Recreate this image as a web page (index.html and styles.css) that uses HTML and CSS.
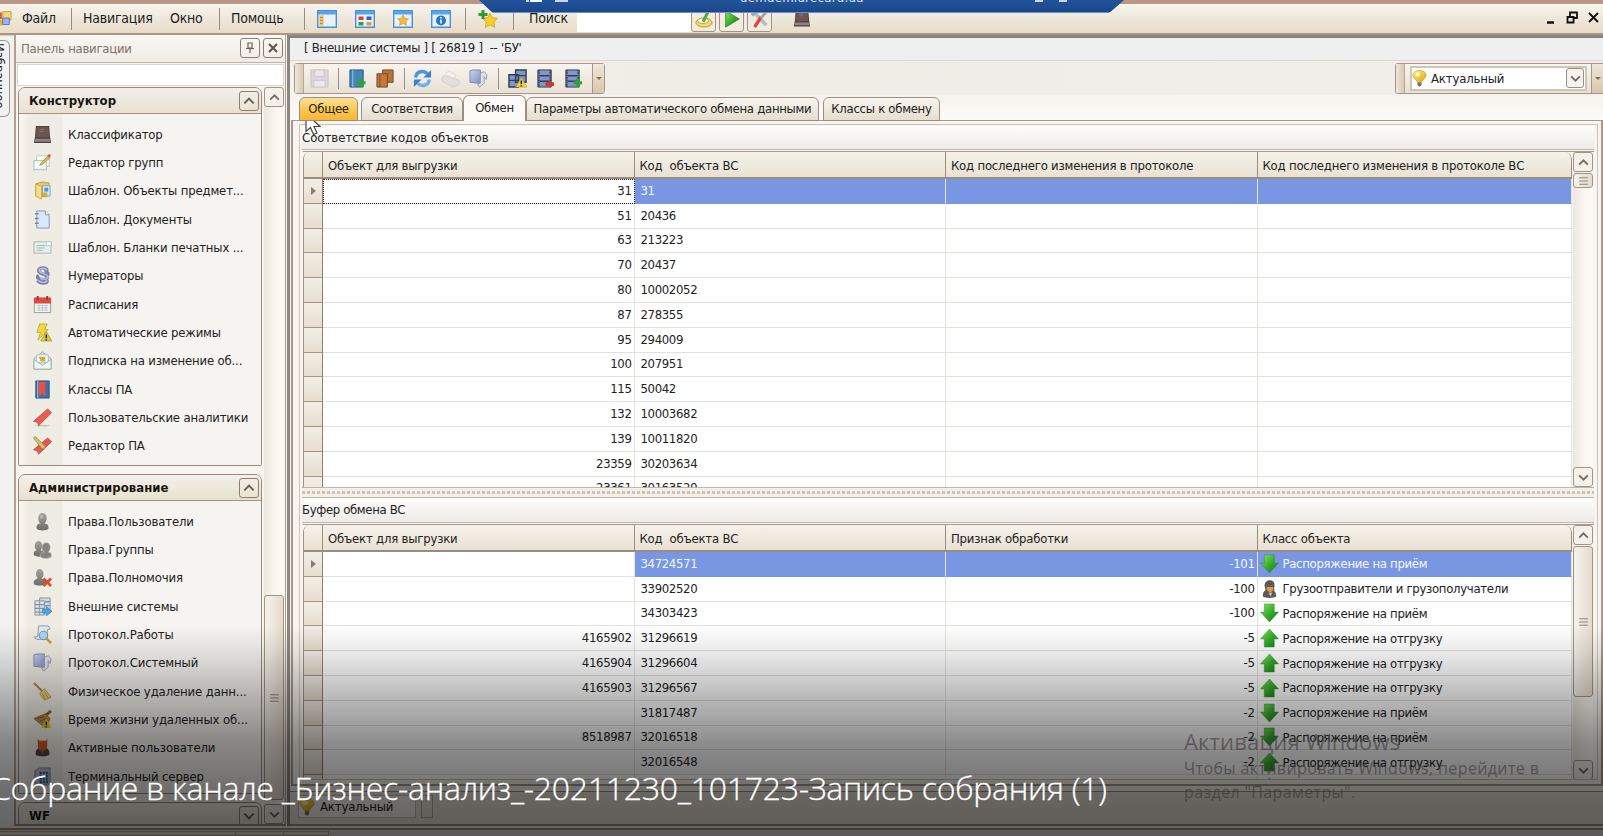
FILE: index.html
```html
<!DOCTYPE html>
<html lang="ru">
<head>
<meta charset="utf-8">
<title>Внешние системы</title>
<link rel="stylesheet" href="styles.css">
</head>
<body>
<svg class="defs" aria-hidden="true">
<defs>
<linearGradient id="gGreen" x1="0" y1="0" x2="1" y2="1"><stop offset="0" stop-color="#8be85f"/><stop offset=".55" stop-color="#35a72b"/><stop offset="1" stop-color="#14781a"/></linearGradient>
<linearGradient id="gYellow" x1="0" y1="0" x2="1" y2="1"><stop offset="0" stop-color="#fff08a"/><stop offset="1" stop-color="#e0a800"/></linearGradient>
<linearGradient id="gGray" x1="0" y1="0" x2="0" y2="1"><stop offset="0" stop-color="#a5a39f"/><stop offset="1" stop-color="#6d6b68"/></linearGradient>
<linearGradient id="gBlue" x1="0" y1="0" x2="1" y2="1"><stop offset="0" stop-color="#c9d3ef"/><stop offset="1" stop-color="#8791c4"/></linearGradient>
</defs>
<symbol id="book" viewBox="0 0 20 20"><path d="M3 1h14l1 12 1 6H1l1-6z" fill="#51423d"/><path d="M4 2h12l1 11H3z" fill="#6b5750"/><path d="M2.500 14.500h15l.5 3H2z" fill="#8d8380"/><path d="M7 5h5M7 7h4" stroke="#8c766d"/></symbol>
<symbol id="edit" viewBox="0 0 20 20"><path d="M4 3h13v11H4z" fill="#fff" stroke="#b8c4c0"/><path d="M1 8h13v10l-2-1-2 1-2-1-2 1-2-1-3 1z" fill="#f3faf8" stroke="#a9bab8"/><path d="M8 11l8-8 2 2-8 7-3 1z" fill="#d9c04c" stroke="#86742a" stroke-width=".6"/><path d="M15 3l2-2 2 2-2 2z" fill="#d8554b"/></symbol>
<symbol id="folder" viewBox="0 0 20 20"><path d="M3 3l7-2 7 1v13l-4 1H3z" fill="#edc564" stroke="#c89a3c"/><path d="M10 5h8v11h-8z" fill="#d7e8f3" stroke="#7ea7c4"/><path d="M12 7h4v4h-4z" fill="#4f8ed0"/><path d="M3 3l6 3v13l-6-3z" fill="#f8dd8e" stroke="#cfa64d"/><path d="M10 12h5v5h-5z" fill="#d6ae35"/></symbol>
<symbol id="doc" viewBox="0 0 20 20"><path d="M4 1h9l4 4v14H4z" fill="#dbe7fa" stroke="#8795b2"/><path d="M13 1v4h4" fill="#fff" stroke="#8795b2"/><path d="M2 4h4M2 9h4M2 14h4" stroke="#7c869c" stroke-width="1.6"/></symbol>
<symbol id="form" viewBox="0 0 20 20"><path d="M1 4h18v12H1z" fill="#e4eeec" stroke="#a5b8b4"/><path d="M4 8h9M4 10.500h8M4 13h6" stroke="#a4b8b0"/><path d="M14 4h5v4h-5z" fill="#fafdfc" stroke="#a9bbb8" stroke-width=".7"/></symbol>
<symbol id="para" viewBox="0 0 20 20"><path d="M15 5c-1-4-9-4-9 0 0 4 9 3 9 7 0 3-6 3-8 1M6 10c-3 2 0 4 3 4M14 10c3-1 2-4-2-4M5 15c2 4 10 4 10 0" fill="none" stroke="#7a7fae" stroke-width="3.600"/><path d="M14.500 4.500c-1-3-8-3-8 0 0 4 9 3 9 7 0 3-6 3-8 1M5.500 15c2 3 9 3 9 0" fill="none" stroke="#b9bde6" stroke-width="1.500"/></symbol>
<symbol id="cal" viewBox="0 0 20 20"><path d="M1.500 3h17v15.500h-17z" fill="#f1f6f6" stroke="#9a9c9b"/><path d="M1 3h18v6H1z" fill="#e2493f"/><path d="M5 1v4M15 1v4" stroke="#8a3a36" stroke-width="2"/><path d="M4 11h12M4 13.500h12M4 16h12M6.500 10v7M10 10v7M13.500 10v7" stroke="#b5c4c6" stroke-width=".8"/></symbol>
<symbol id="bolt" viewBox="0 0 20 20"><path d="M7 1h8l-3 6h4L5 18l3-8H4z" fill="#f0d93f" stroke="#b8a02b" stroke-width=".8"/><path d="M14 9l6 10H8z" fill="#d9c72e" stroke="#a09020" stroke-width=".6"/><path d="M14 12v4M14 17v1.500" stroke="#222" stroke-width="1.500"/></symbol>
<symbol id="mail" viewBox="0 0 20 20"><path d="M1 8l9-7 9 7v11H1z" fill="#dce8e8" stroke="#93a7a9"/><path d="M4 4h12v8H4z" fill="#fff" stroke="#a9bac8"/><path d="M6 6h7v5H8z" fill="#cfb032"/><path d="M1 9l9 6 9-6v10H1z" fill="#eef6f4" stroke="#9eb2b2"/></symbol>
<symbol id="class" viewBox="0 0 20 20"><path d="M3 1h14v18H3z" fill="#3f72a8" stroke="#294d78"/><path d="M5 1v18" stroke="#b6c9dc"/><path d="M6 2h7v15l-3.500-3L6 17z" fill="#e5504d"/></symbol>
<symbol id="ribbon" viewBox="0 0 20 20"><ellipse cx="10" cy="18.500" rx="8" ry="1" fill="#c9c5bd"/><path d="M15.500 1l4 4L6 18.500l-1.500-3.500-4-1z" fill="#ea5c55" stroke="#b84640" stroke-width=".8"/></symbol>
<symbol id="ribbonEdit" viewBox="0 0 20 20"><path d="M15.500 2l4 4L6 19l-1.500-3.500-4-1z" fill="#e9584e" stroke="#b84640" stroke-width=".8"/><path d="M1 1l2 0 10 10-1 3-3-1L1 3z" fill="#d8bd64" stroke="#8b7a40" stroke-width=".6"/></symbol>
<symbol id="user" viewBox="0 0 20 20"><path d="M4 18c-1-4 1-6 4-6-4-3-3-11 2-11s6 8 2 11c4 0 5 3 4 6-2 2-10 2-12 0z" fill="url(#gGray)"/><circle cx="9" cy="5" r="2" fill="#c3c1bd" opacity=".7"/></symbol>
<symbol id="users" viewBox="0 0 20 20"><path d="M1 16c-1-4 1-5 3-5C0 8 2 1 6 1s5 7 2 10c3 0 4 2 4 5-3 2-8 2-11 0z" fill="url(#gGray)"/><path d="M8 18c-1-4 1-5 4-5-4-3-3-10 2-10s5 7 2 10c3 0 4 2 3 5-3 2-8 2-11 0z" fill="#868480" stroke="#b5b3ae" stroke-width=".6"/></symbol>
<symbol id="userX" viewBox="0 0 20 20"><path d="M1 17c-1-4 1-5 4-6C2 8 3 1 7 1s6 7 2 10c4 1 5 3 4 6-3 2-9 2-12 0z" fill="url(#gGray)"/><path d="M11 11l8 8M19 11l-8 8" stroke="#dc4b2c" stroke-width="2.800"/></symbol>
<symbol id="server" viewBox="0 0 20 20"><path d="M7 1h11v15H7z" fill="#d3d9e0" stroke="#8b929c"/><path d="M2 4h10v15H2z" fill="#dce1e7" stroke="#8b929c"/><path d="M2 8h10M2 12h10M2 16h10M12 5h6M12 9h6" stroke="#8b929c" stroke-width="1.400"/><path d="M7 4v15" stroke="#8b929c"/><path d="M10 13h4v-3l6 5-6 5v-3h-4z" fill="#49a5e6" stroke="#2677bb" stroke-width=".6"/></symbol>
<symbol id="log" viewBox="0 0 20 20"><path d="M6 1h10l2 3-3 1v10H4l-3-2 4-1z" fill="#e4e9ef" stroke="#8e97a5"/><circle cx="11" cy="11" r="4.500" fill="#a8d6ef" stroke="#6b91ac"/><path d="M14 14l5 5" stroke="#d3963b" stroke-width="2.600"/></symbol>
<symbol id="scroll" viewBox="0 0 20 20"><path d="M1 2l3-1h8v13l-2 1-9-1z" fill="url(#gBlue)" stroke="#8689b3"/><path d="M12 4l4-1 3 3-1 5-2-3v7l-5 4-2-3 3-1z" fill="#dfe2ee" stroke="#878da2" stroke-width=".8"/></symbol>
<symbol id="broom" viewBox="0 0 20 20"><path d="M1 1l9 9" stroke="#a98849" stroke-width="2.200"/><path d="M12 7l7 9-7 3-5-7z" fill="#e9cf77" stroke="#a9863d" stroke-width=".8"/><path d="M10 12l3 6M12 10l4 7" stroke="#b28c3c" stroke-width=".8"/></symbol>
<symbol id="broomWarn" viewBox="0 0 20 20"><path d="M19 1l-6 5" stroke="#806540" stroke-width="3"/><path d="M13 4l5 5-5 10L1 9z" fill="#b88b4c" stroke="#7d5a2c" stroke-width=".8"/><path d="M4 9l8-2M7 12l7-3" stroke="#7d5a2c"/><path d="M14 9l6 10H9z" fill="#dfca25"/><path d="M14 12v4M14 17v1.500" stroke="#222" stroke-width="1.500"/></symbol>
<symbol id="active" viewBox="0 0 20 20"><path d="M3 18c-1-5 2-7 4-8h6c3 1 5 4 4 8-3 2-11 2-14 0z" fill="#4d4542"/><path d="M5 1l2 2h6l2-2v6c0 5-2 6-5 6s-5-1-5-6z" fill="#cd5b25"/><path d="M8 11h4l-2 6z" fill="#dd4b24"/></symbol>
<symbol id="terminal" viewBox="0 0 20 20"><path d="M2 4l5-3h11v16l-3 2H2z" fill="#b8bec8" stroke="#79808b"/><path d="M7 5h9v12H7z" fill="#345f9c"/><path d="M7 8h9M7 11h9M7 14h9M10 5v12M13 5v12" stroke="#b9cae2" stroke-width=".8"/></symbol>
<symbol id="down" viewBox="0 0 20 20"><path d="M4.500.5h10.500v8.500h4.500L10 19.500.5 9h4z" fill="url(#gGreen)" stroke="#279428" stroke-width=".5"/></symbol>
<symbol id="up" viewBox="0 0 20 20"><path d="M4.500 19.500H15V11h4.500L10 .5.500 11h4z" fill="url(#gGreen)" stroke="#279428" stroke-width=".5"/></symbol>
<symbol id="agent" viewBox="0 0 20 20"><path d="M3 18c0-5 1-6 4-7h6c3 1 4 3 4 7-2 2-12 2-14 0z" fill="#5c5956"/><path d="M5 8c-2-9 12-10 10-1v5H6z" fill="#5a5856"/><path d="M7 6h7v5l-3 3-4-3z" fill="#d79c5c"/><path d="M7 7h8" stroke="#423b36" stroke-width="1.500"/><path d="M9 14h4l-2 4z" fill="#c8c3b8"/></symbol>
<symbol id="bulb" viewBox="0 0 18 20"><path d="M6 14c0-3-5-4-5-8C1-1.500 17-1.500 17 6c0 4-5 5-5 8z" fill="url(#gYellow)" stroke="#c79a17" stroke-width=".7"/><path d="M6.500 14.500h5V18L9 20l-2.500-2z" fill="#77736c"/><circle cx="7" cy="5" r="2.500" fill="#fffbd0"/></symbol>
<symbol id="save" viewBox="0 0 20 20"><path d="M1 1h18v18H1z" fill="#dcd6d8" stroke="#c9c3c5"/><path d="M5 1h10v7H5zM4 12h12v7H4z" fill="#ece8e8" stroke="#cdc6c8"/></symbol>
<symbol id="bookAdd" viewBox="0 0 20 20"><path d="M2 1h14v18H2z" fill="#4388b9" stroke="#285a84"/><path d="M5 1v18" stroke="#9cc8e0"/><path d="M14 10v9M9.500 14.500h9" stroke="#2ba336" stroke-width="3"/></symbol>
<symbol id="copy" viewBox="0 0 20 20"><path d="M7 1h11v13H7z" fill="#b87336" stroke="#744622"/><path d="M1 5h11v14H1z" fill="#c4793b" stroke="#744622"/><path d="M4 5v14" stroke="#80481e"/></symbol>
<symbol id="refresh" viewBox="0 0 20 20"><path d="M3 9c0-7 9-8 12-4" fill="none" stroke="#4b96da" stroke-width="3.600"/><path d="M11 9h8V1z" fill="#3c82cb"/><path d="M17 11c0 7-9 8-12 4" fill="none" stroke="#6bb2e8" stroke-width="3.600"/><path d="M9 11H1v8z" fill="#3c82cb"/></symbol>
<symbol id="print" viewBox="0 0 20 20"><path d="M2 8l6-6 8 4-3 5z" fill="#f3f0ed" stroke="#dcd7d2"/><path d="M1 9l5-2 13 5v4l-6 3L1 13z" fill="#e4dfda" stroke="#d7d1ca"/></symbol>
<symbol id="film" viewBox="0 0 20 20"><path d="M2 1h14v18H2z" fill="#8296c8" stroke="#333c50"/><path d="M3 1v18M15 1v18" stroke="#39435a" stroke-width="2" stroke-dasharray="1.500 1"/><path d="M4 7h10M4 13h10" stroke="#333d56" stroke-width="1.600"/></symbol>
<symbol id="filmWarn" viewBox="0 0 20 20"><path d="M8 1h11v13H8zM1 6h10v13H1z" fill="#8296c8" stroke="#333c50" stroke-width="1.500"/><path d="M1 12h10M8 7h11" stroke="#333d56" stroke-width="1.500"/><path d="M14 9l6 10H8z" fill="#e9d63b" stroke="#a99a22" stroke-width=".6"/><path d="M14 12v4M14 17v1.500" stroke="#222" stroke-width="1.500"/></symbol>
<symbol id="filmDel" viewBox="0 0 20 20"><use href="#film"/><rect x="10" y="14" width="9" height="4" rx="1" fill="#d8332d"/></symbol>
<symbol id="filmAdd" viewBox="0 0 20 20"><use href="#film"/><path d="M14.500 10v9M10 14.500h9" stroke="#2ba336" stroke-width="3.200"/></symbol>
<symbol id="starAdd" viewBox="0 0 20 20"><path d="M12 4l2.300 4.800 5.200.6-3.800 3.600 1 5.500-4.700-2.700-4.700 2.700 1-5.500L4.500 9.400l5.200-.6z" fill="#f5cf2c" stroke="#d39a12" stroke-width=".8"/><path d="M5 1v9M.5 5.500h9" stroke="#2b9a2f" stroke-width="3"/></symbol>
<symbol id="win" viewBox="0 0 20 18"><path d="M.7.7h18.600v16.600H.7z" fill="#e9f2fc" stroke="#4a90d4" stroke-width="1.400"/><path d="M1 1h18v3.500H1z" fill="#58a4e8"/></symbol>
<symbol id="winSide" viewBox="0 0 20 18"><use href="#win"/><path d="M2 5h5v11H2z" fill="#f3d590"/><path d="M3 7.500h3M3 10.500h3M3 13.500h3" stroke="#c18c2d" stroke-width="1.500"/></symbol>
<symbol id="winTiles" viewBox="0 0 20 18"><use href="#win"/><path d="M3.500 6.500h5v3.500h-5z" fill="#d94436"/><path d="M11.500 6.500h5v3.500h-5z" fill="#3564b8"/><path d="M3.500 12h5v3.500h-5z" fill="#3e9a42"/><path d="M11.500 12h5v3.500h-5z" fill="#e3a02d"/></symbol>
<symbol id="winStar" viewBox="0 0 20 18"><use href="#win"/><path d="M10 5l1.800 3.400 3.700.4-2.700 2.600.7 3.900-3.500-1.900-3.500 1.900.7-3.900-2.700-2.600 3.700-.4z" fill="#f2bd3f" stroke="#cb8e1d" stroke-width=".6"/></symbol>
<symbol id="winInfo" viewBox="0 0 20 18"><use href="#win"/><circle cx="10" cy="10.500" r="5" fill="#2279d2"/><path d="M10 7v1.500M10 9.500v4" stroke="#fff" stroke-width="1.600"/></symbol>
<symbol id="clean" viewBox="0 0 20 20"><ellipse cx="10" cy="14" rx="9" ry="5" fill="#f0dd62" stroke="#af9328"/><ellipse cx="9" cy="12" rx="6" ry="3" fill="#fffbe0" stroke="#b2a260"/><path d="M9 13l6-12" stroke="#54a849" stroke-width="3.500"/></symbol>
<symbol id="play" viewBox="0 0 20 20"><path d="M3 1l15 9-15 9z" fill="url(#gGreen)" stroke="#1c7421" stroke-width=".8"/></symbol>
<symbol id="tools" viewBox="0 0 20 20"><path d="M3 2l14 15" stroke="#b9bdc0" stroke-width="4"/><path d="M1 6l6-5" stroke="#a5a9ac" stroke-width="4"/><path d="M11 8l-7 11" stroke="#e4442f" stroke-width="3.600"/><path d="M18 1l-7 8" stroke="#9fa3a6" stroke-width="3"/></symbol>
<symbol id="chevUp" viewBox="0 0 12 12"><path d="M2 8l4-4 4 4" fill="none" stroke="currentColor" stroke-width="1.700"/></symbol>
<symbol id="chevDown" viewBox="0 0 12 12"><path d="M2 4l4 4 4-4" fill="none" stroke="currentColor" stroke-width="1.700"/></symbol>
<symbol id="lines" viewBox="0 0 12 12"><path d="M2 3.500h8M2 6.500h8M2 9.500h8" stroke="#8f8377"/></symbol>
</svg>

<div class="screen">
  <header class="menubar">
    <svg class="app-icon" viewBox="4 0 13 18"><path d="M0 2h6v7H0z" fill="#d65a3c"/><path d="M7 1h9v9H7z" fill="#f6d873" stroke="#c39a32"/><path d="M0 10h7v6H0z" fill="#e7af46"/><path d="M7 8h7v7H7z" fill="#9eb4ea" stroke="#5571bb"/></svg>
    <span class="m m-file">Файл</span><i class="msep"></i>
    <span class="m m-nav">Навигация</span><span class="m m-win">Окно</span><i class="msep"></i>
    <span class="m m-help">Помощь</span><i class="msep"></i>
    <span class="win-icons"><svg><use href="#winSide"/></svg><svg><use href="#winTiles"/></svg><svg><use href="#winStar"/></svg><svg><use href="#winInfo"/></svg></span>
    <i class="msep"></i><svg class="star-add"><use href="#starAdd"/></svg><i class="msep"></i>
    <span class="m m-find">Поиск</span>
    <span class="find-box"></span>
    <span class="find-btns"><b><svg><use href="#clean"/></svg></b><b><svg><use href="#play"/></svg></b><b><svg><use href="#tools"/></svg></b></span>
    <svg class="menu-book"><use href="#book"/></svg>
    <svg class="mdi" viewBox="0 0 56 16"><path d="M2 12.500h7" stroke="#111" stroke-width="2.500"/><path d="M25 6V2.500h7V8h-3M22.500 7h6v5.500h-6z" fill="none" stroke="#111" stroke-width="1.800"/><path d="M44 3l9 9M53 3l-9 9" stroke="#111" stroke-width="1.800"/></svg>
  </header>

  <div class="main">
    <div class="rail"><div class="rail-tab"><span>Избранное</span></div></div>

    <aside class="nav">
      <div class="nav-title"><span>Панель навигации</span>
        <b><svg viewBox="0 0 12 12"><path d="M4 1h4v5H4zM2 6.500h8M6 7v4" fill="none" stroke="#6f6157" stroke-width="1.200"/></svg></b>
        <b><svg viewBox="0 0 12 12"><path d="M2 2l8 8M10 2l-8 8" stroke="#5d5048" stroke-width="2"/></svg></b></div>
      <div class="nav-input"></div>
      <div class="nav-body">
        <div class="groups">
          <section class="group g1"><h2>Конструктор<b><svg><use href="#chevUp"/></svg></b></h2><ul id="navBuild"></ul></section>
          <section class="group g2"><h2>Администрирование<b><svg><use href="#chevUp"/></svg></b></h2><ul id="navAdmin"></ul></section>
          <section class="group g3"><h2>WF<b><svg><use href="#chevDown"/></svg></b></h2></section>
        </div>
        <div class="vscroll"><b class="sbtn"><svg><use href="#chevUp"/></svg></b><b class="thumb nav-thumb"><svg><use href="#lines"/></svg></b><b class="sbtn"><svg><use href="#chevDown"/></svg></b></div>
      </div>
    </aside>

    <section class="doc">
      <div class="doc-title">[ Внешние системы ] [ 26819 ]&nbsp; -- 'БУ'</div>
      <div class="doc-tools">
        <div class="tools">
          <i class="grip"></i>
          <svg class="t1"><use href="#save"/></svg><i class="tsep"></i>
          <svg class="t2"><use href="#bookAdd"/></svg><svg class="t3"><use href="#copy"/></svg><i class="tsep"></i>
          <svg class="t4"><use href="#refresh"/></svg><svg class="t5"><use href="#print"/></svg><svg class="t5"><use href="#scroll"/></svg><i class="tsep"></i>
          <svg class="t6"><use href="#filmWarn"/></svg><svg class="t5"><use href="#filmDel"/></svg><svg class="t5"><use href="#filmAdd"/></svg>
          <i class="more"></i>
        </div>
        <div class="state"><i class="grip"></i><div class="combo"><svg><use href="#bulb"/></svg><span>Актуальный</span><b><svg><use href="#chevDown"/></svg></b></div><i class="more"></i></div>
      </div>
      <div class="tabs"><span class="tab hot">Общее</span><span class="tab tb2">Соответствия</span><span class="tab on">Обмен</span><span class="tab tb4">Параметры автоматического обмена данными</span><span class="tab tb5">Классы к обмену</span></div>
      <div class="page">
        <div class="page-in">
          <div class="band">Соответствие кодов объектов</div>
          <div class="gridbox top">
            <div class="grid"><div class="row head"><i></i><span>Объект для выгрузки</span><span>Код&nbsp; объекта ВС</span><span>Код последнего изменения в протоколе</span><span>Код последнего изменения в протоколе ВС</span></div><div id="rowsTop"></div></div>
            <div class="vscroll"><b class="sbtn"><svg><use href="#chevUp"/></svg></b><b class="thumb small"><svg><use href="#lines"/></svg></b><i class="space"></i><b class="sbtn"><svg><use href="#chevDown"/></svg></b></div>
          </div>
          <div class="splitter"><i></i></div>
          <div class="band second">Буфер обмена ВС</div>
          <div class="gridbox bottom">
            <div class="grid"><div class="row head"><i></i><span>Объект для выгрузки</span><span>Код&nbsp; объекта ВС</span><span>Признак обработки</span><span>Класс объекта</span></div><div id="rowsBottom"></div></div>
            <div class="vscroll"><b class="sbtn"><svg><use href="#chevUp"/></svg></b><b class="thumb big"><svg><use href="#lines"/></svg></b><i class="space"></i><b class="sbtn"><svg><use href="#chevDown"/></svg></b></div>
          </div>
        </div>
      </div>
      <div class="foot"><div class="foot-state"><svg><use href="#bulb"/></svg><span>Актуальный</span></div><i></i></div>
    </section>
  </div>
  <footer class="status"><i class="s1"></i><i class="s2"></i><i class="s3"></i></footer>

  <div class="rdp"><div class="rdp-in"><i class="r1"></i><i class="r2"></i><i class="r3"></i><span>demdemidrecaru.ua</span><i class="r4"></i><i class="r5"></i></div></div>
  <svg class="cursor" viewBox="0 0 16 24"><path d="M1 1v18l4.500-4 3 7 3.500-1.500-3-6.500H15z" fill="#fff" stroke="#444" stroke-width="1.200"/></svg>
  <div class="activate"><h3>Активация Windows</h3><p>Чтобы активировать Windows, перейдите в<br>раздел "Параметры".</p></div>
  <div class="shade"></div>
  <div class="caption">Собрание в канале _Бизнес-анализ_-20211230_101723-Запись собрания (1)</div>
</div>
<script src="app.js"></script>
</body>
</html>
```
FILE: styles.css
```css
* { box-sizing: border-box; }
body { margin: 0; overflow: hidden; font: 13px "DejaVu Sans Condensed", "DejaVu Sans", "Noto Sans", sans-serif; letter-spacing: -0.35px; color: #222; }
.defs { position: absolute; width: 0; height: 0; }
.screen { position: relative; width: 1603px; height: 836px; overflow: hidden; background: #f6f4ef; display: flex; flex-direction: column; }
svg { display: block; flex: none; }
i { flex: none; }
ul, h2, h3, p { margin: 0; padding: 0; }

.menubar { height: 35px; flex: none; border-top: 4px solid #b89786; border-bottom: 2px solid #ab9680; background: linear-gradient(#f7f4ec, #ece5d8 60%, #e9dcc6); display: flex; align-items: center; font-size: 14px; letter-spacing: -.22px; color: #1d1d1d; }
.app-icon { width: 12px; height: 18px; margin-right: 10px; }
.m { white-space: nowrap; flex: none; padding-bottom: 2px; }
.m-file { width: 49px; }
.m-nav { width: 87px; margin-left: 11px; }
.m-win { width: 49px; }
.m-help { width: 73px; margin-left: 11px; }
.msep { width: 1px; height: 22px; background: #9b8c7d; }
.win-icons { display: flex; gap: 18px; margin: 0 14px 0 12px; }
.win-icons svg { width: 20px; height: 18px; }
.star-add { width: 20px; height: 20px; margin: 0 15px 0 12px; }
.m-find { width: 48px; margin-left: 15px; }
.find-box { width: 114px; height: 26px; background: #fff; }
.find-btns { display: flex; gap: 3px; background: #f1ebe1; }
.find-btns b { width: 25px; height: 26px; border: 1px solid #a39383; border-radius: 3px; display: grid; place-items: center; background: #f1ebe0; }
.find-btns svg { width: 18px; height: 18px; }
.menu-book { width: 18px; height: 19px; margin-left: 21px; }
.mdi { width: 56px; height: 16px; margin: 0 2px 2px auto; }

.main { height: 793px; flex: none; display: flex; }
.rail { width: 14px; padding-top: 4px; background: #f1f2f2; border-top: 1px solid #d7cdc2; }
.rail-tab { width: 10px; height: 77px; border: 1px solid #a69686; border-left: 0; border-radius: 0 6px 6px 0; overflow: hidden; }
.rail-tab span { display: block; writing-mode: vertical-rl; margin-left: -9px; padding-top: 2px; line-height: 17px; letter-spacing: -.1px; }

.nav { width: 272px; border-left: 2px solid #b3a091; border-right: 1px solid #b3a091; background: #f8f4ee; display: flex; flex-direction: column; height: 791px; border-bottom: 2px solid #9c9085; }
.nav-title { height: 28px; flex: none; display: flex; align-items: center; gap: 3px; padding: 0 2px 1px 5px; border-bottom: 1px solid #c2b3a5; color: #827164; background: linear-gradient(#faf8f5, #f0ebe4); }
.nav-title span { flex: 1; letter-spacing: -.25px; }
.nav-title b { width: 20px; height: 20px; border: 1px solid #8f7e70; border-radius: 3px; display: grid; place-items: center; }
.nav-title svg { width: 12px; height: 12px; }
.nav-input { height: 22px; flex: none; margin: 1px 1px 1px; border: 1px solid #dcd4ca; background: #fff; }
.nav-body { flex: 1; min-height: 0; display: flex; }
.groups { width: 248px; padding-left: 2px; flex: none; overflow: hidden; }
.group { width: 244px; border: 1px solid #9b8879; border-radius: 7px 7px 2px 2px; background: #f6f4f0; margin-bottom: 8px; overflow: hidden; }
.group h2 { height: 26px; display: flex; align-items: center; justify-content: space-between; padding: 0 2px 0 10px; font-size: 13px; color: #1a1512; background: linear-gradient(#f4f0e9, #e8e1d2); border-bottom: 1px solid #a59281; letter-spacing: .05px; }
.group h2 b { width: 20px; height: 20px; border: 1px solid #8f7e70; border-radius: 3px; display: grid; place-items: center; color: #6b5c50; }
.group h2 svg { width: 14px; height: 14px; }
.g1 { height: 379px; }
.g2 { height: 320px; }
.g3 { height: 40px; }
.group ul { list-style: none; padding-top: 6px; height: 100%; background: linear-gradient(90deg, #f6f4f0 3px, #efece3 10px, #efece3 43px, #f6f4f0 44px); }
.group li { height: 28.330px; display: flex; align-items: center; padding-left: 14px; white-space: nowrap; letter-spacing: -.16px; }
.g2 li { letter-spacing: -.12px; }
.group li svg { width: 19px; height: 19px; margin-right: 16px; }
.vscroll { width: 20px; flex: none; display: flex; flex-direction: column; background: linear-gradient(90deg, #ece7de, #faf7f0 60%, #fdfbf6); color: #77695e; }
.sbtn { width: 20px; height: 20px; flex: none; border: 1px solid #a39384; border-radius: 3px; display: grid; place-items: center; background: #f4f1eb; }
.vscroll svg { width: 13px; height: 13px; }
.thumb { border: 1px solid #a39384; border-radius: 3px; display: grid; place-items: center; background: linear-gradient(90deg, #f5f2ec, #e5dbcd); flex: none; }
.nav-thumb { height: 205px; margin: 488px 0 4px; }
.space { flex: 1; }

.doc { flex: 1; min-width: 0; display: flex; flex-direction: column; border-top: 3px solid #848484; border-left: 3px solid #8b8784; margin-left: 1px; height: 791px; }
.doc-title { height: 23px; flex: none; padding: 0 0 0 14px; line-height: 20px; background: #efefef; border-bottom: 1px solid #d9d9d6; letter-spacing: -.26px; }
.doc-tools { height: 34px; flex: none; display: flex; align-items: center; justify-content: space-between; background: linear-gradient(90deg, #f5f2ed, #f0ece6 30%, #f2efea); padding-left: 4px; }
.tools, .state { height: 31px; border: 1px solid #a6978a; border-radius: 3px; display: flex; align-items: center; background: linear-gradient(#f8f5ef, #e8e0d3); }
.tools { width: 311px; }
.grip { align-self: stretch; width: 9px; background: linear-gradient(90deg, #efe7db, #d9c9b2); border-right: 1px solid #b8a998; }
.tools svg { width: 19px; height: 19px; }
.tools .t1 { margin: 0 9px 0 6px; }
.tools .t2 { margin-left: 9px; }
.tools .t3 { margin: 0 9px; }
.tools .t4 { margin-left: 8px; }
.tools .t5 { margin-left: 9px; }
.tools .t5 + .tsep { margin-left: 10px; }
.tools .t6 { margin-left: 9px; }
.tsep { width: 1px; height: 21px; background: #9c8e80; }
.more { align-self: stretch; width: 12px; border-left: 1px solid #a6978a; background: linear-gradient(#efe7da, #d8c6ac); display: grid; place-items: center; margin-left: auto; }
.more::after { content: ""; border: 3px solid transparent; border-top-color: #7d6d5e; border-bottom: 0; }
.state { width: 208px; border-right: 0; border-radius: 3px 0 0 3px; }
.combo { width: 177px; height: 25px; margin-left: 5px; border: 2px solid #cfc6ba; background: #fff; display: flex; align-items: center; padding: 0 1px 0 0; }
.combo > svg { width: 15px; height: 19px; margin-right: 4px; }
.combo span { flex: 1; letter-spacing: -.15px; }
.combo b { width: 18px; height: 20px; border: 1px solid #9d8e80; border-radius: 3px; display: grid; place-items: center; background: #f6f3ee; color: #77695e; }
.combo b svg { width: 13px; height: 13px; }

.tabs { height: 25px; flex: none; display: flex; align-items: flex-end; padding-left: 9px; background: linear-gradient(#f6f3ee, #fafaf7); position: relative; z-index: 1; }
.tab { height: 24px; margin-bottom: -1px; border: 1px solid #9b8d80; border-radius: 6px 6px 0 0; background: linear-gradient(#f7f4ee, #e6dece); display: grid; place-items: center; white-space: nowrap; flex: none; letter-spacing: -.28px; padding-bottom: 2px; }
.hot { width: 59px; margin-right: 3px; background: linear-gradient(#f6e29b, #fbc956 50%, #fbb530); }
.tb2 { width: 102px; }
.on { width: 63px; height: 26px; background: #fbfaf7; border-bottom: 0; padding-bottom: 3px; }
.tb4 { width: 293px; margin-right: 4px; }
.tb5 { width: 117px; }
.page { height: 666px; flex: none; border: 1px solid #a6988b; border-width: 1px 2px 2px; padding: 3px 3px 4px 6px; background: #f8f5f0; margin-left: 1px; }
.page-in { height: 100%; border: 1px solid #ccc3b9; padding: 1px 3px 0 2px; overflow: hidden; }
.band { height: 24px; line-height: 23px; background: linear-gradient(#fdfdfc, #eeebe6); border-bottom: 1px solid #c3b8ad; letter-spacing: 0; }
.second { height: 25px; letter-spacing: -.35px; line-height: 23px; }
.gridbox { display: flex; border-top: 1px solid #a99b8e; margin: 1px 0 0 1px; }
.top { height: 336px; }
.bottom { height: 256px; }
.grid { width: 1269px; overflow: hidden; flex: none; background: #fff; margin-right: 1px; border-radius: 7px 7px 0 0; border-left: 1px solid #a09182; }
.row { display: flex; height: 24.800px; }
.row > * { flex: none; width: 311.500px; padding: 0 1px 1px 6px; border-right: 1px solid #e6e2dc; border-bottom: 1px solid #e3dfd9; display: flex; align-items: center; white-space: pre; }
.row > i { width: 19px; padding: 0; border-right: 1px solid #8e7e70; border-bottom: 1px solid #a39385; background: linear-gradient(#f3eee6, #e7dece); justify-content: center; }
.row > .num { justify-content: flex-end; padding-right: 2px; }
.row > :last-child { width: 314px; padding-bottom: 0; letter-spacing: -.3px; }
.head { height: 27px; }
.head > span, .head > i { border-right: 1px solid #9b8b7c; border-bottom: 2px solid #9a8c80; background: linear-gradient(#f6f2eb, #e9e1d3); padding: 1px 0 0 5px; letter-spacing: -.2px; }
.row.head > :last-child { border-radius: 0 7px 0 0; padding-top: 1px; letter-spacing: -.2px; }
.sel > .blue { background: #7896e2; color: #f3f6ff; border-bottom-color: #7896e2; }
.sel > .focus { outline: 1px dotted #222; outline-offset: -1px; }
.sel > i::after { content: ""; border: 4px solid transparent; border-left: 5px solid #8c7b6d; border-right: 0; }
.row svg { width: 19px; height: 20px; margin: 0 4px 0 -4px; }
.small { height: 15px; margin-top: 1px; }
.big { height: 151px; margin-top: 1px; }
.splitter { height: 11px; border: 1px solid #bfb4a9; border-width: 1px 0; background: #f3eee8; display: grid; align-items: center; }
.splitter i { height: 3px; background: repeating-linear-gradient(90deg, #d0c4b7 0 3px, transparent 3px 5px); }

.foot { flex: 1; display: flex; gap: 5px; padding: 3px 5px 6px 8px; border-top: 1px solid #9a8d80; margin-top: 5px; border-bottom: 2px solid #9c9085; background: #e9e2d6; }
.foot-state { width: 118px; background: #f8f6f2; border: 1px solid #c7bcb0; display: flex; align-items: center; gap: 5px; letter-spacing: -.15px; }
.foot-state svg { width: 16px; height: 20px; }
.foot > i { width: 12px; border: 1px solid #b5a898; }
.status { flex: 1; background: #e2ddd4; border-top: 2px solid #9b8f83; display: flex; padding-top: 1px; }
.status i { border: 1px solid #b3a798; border-left: 0; }
.s1 { width: 236px; } .s2 { width: 48px; } .s3 { width: 45px; }

.rdp { position: absolute; left: 479px; top: 0; width: 645px; height: 13px; background: #6f8ec0; clip-path: polygon(0 0, 100% 0, 630px 100%, 14px 100%); }
.rdp-in { height: 11.500px; background: linear-gradient(#22549a, #1b478c); display: flex; position: relative; color: #dfe8f6; font-size: 13px; }
.rdp-in span { position: absolute; left: 261px; top: -10px; line-height: 16px; letter-spacing: .3px; }
.rdp-in i { position: absolute; background: #c8d6eb; height: 2px; top: 0; }
.r1 { left: 47px; width: 3px; } .r2 { left: 51px; width: 12px; } .r3 { left: 76px; width: 13px; } .r4 { left: 556px; width: 8px; } .r5 { left: 580px; width: 8px; }
.rdp-in .r2 { background: #fff; }
.cursor { position: absolute; left: 305px; top: 112px; width: 16px; height: 25px; }
.activate { position: absolute; left: 1184px; top: 726px; color: rgba(130, 128, 126, .72); font-family: "Open Sans", "Noto Sans", sans-serif; letter-spacing: 0; white-space: nowrap; }
.activate h3 { font-size: 22px; font-weight: 400; line-height: 30px; letter-spacing: .15px; }
.activate p { font-size: 16px; line-height: 24px; letter-spacing: .38px; }
.shade { position: absolute; left: 0; right: 0; top: 625px; bottom: 0; background: linear-gradient(rgba(0,0,0,0), rgba(0,0,0,.08) 12%, rgba(0,0,0,.28) 35%, rgba(0,0,0,.45) 56%, rgba(0,0,0,.55) 78%, rgba(0,0,0,.6)); }
.caption { position: absolute; left: -9px; top: 767px; font: 300 32px/42px "Open Sans", "Noto Sans", sans-serif; letter-spacing: -.27px; color: #fff; white-space: nowrap; -webkit-text-stroke: .3px #fff; }
```
FILE: app.js
```js
const icon = (id) => `<svg><use href="#${id}"/></svg>`;

const build = [
  ["book", "Классификатор"], ["edit", "Редактор групп"], ["folder", "Шаблон. Объекты предмет..."],
  ["doc", "Шаблон. Документы"], ["form", "Шаблон. Бланки печатных ..."], ["para", "Нумераторы"],
  ["cal", "Расписания"], ["bolt", "Автоматические режимы"], ["mail", "Подписка на изменение об..."],
  ["class", "Классы ПА"], ["ribbon", "Пользовательские аналитики"], ["ribbonEdit", "Редактор ПА"]
];
const admin = [
  ["user", "Права.Пользователи"], ["users", "Права.Группы"], ["userX", "Права.Полномочия"],
  ["server", "Внешние системы"], ["log", "Протокол.Работы"], ["scroll", "Протокол.Системный"],
  ["broom", "Физическое удаление данн..."], ["broomWarn", "Время жизни удаленных об..."],
  ["active", "Активные пользователи"], ["terminal", "Терминальный сервер"]
];
const list = (items) => items.map(([i, t]) => `<li>${icon(i)}<span>${t}</span></li>`).join("");
document.getElementById("navBuild").innerHTML = list(build);
document.getElementById("navAdmin").innerHTML = list(admin);

const codes = [
  ["31", "31"], ["51", "20436"], ["63", "213223"], ["70", "20437"], ["80", "10002052"],
  ["87", "278355"], ["95", "294009"], ["100", "207951"], ["115", "50042"], ["132", "10003682"],
  ["139", "10011820"], ["23359", "30203634"], ["23361", "30163529"]
];
document.getElementById("rowsTop").innerHTML = codes.map(([a, b], n) =>
  `<div class="row${n ? "" : " sel"}"><i></i><span class="num focus">${a}</span><span class="blue">${b}</span><span class="blue"></span><span class="blue"></span></div>`
).join("");

const IN = ["down", "Распоряжение на приём"], OUT = ["up", "Распоряжение на отгрузку"];
const buffer = [
  ["", "34724571", "-101", IN], ["", "33902520", "-100", ["agent", "Грузоотправители и грузополучатели"]],
  ["", "34303423", "-100", IN], ["4165902", "31296619", "-5", OUT], ["4165904", "31296604", "-5", OUT],
  ["4165903", "31296567", "-5", OUT], ["", "31817487", "-2", IN], ["8518987", "32016518", "-2", IN],
  ["", "32016548", "-2", OUT], ["", "", "", ["up", ""]]
];
document.getElementById("rowsBottom").innerHTML = buffer.map(([a, b, c, d], n) =>
  `<div class="row${n ? "" : " sel"}"><i></i><span class="num">${a}</span><span class="blue">${b}</span><span class="num blue">${c}</span><span class="blue">${icon(d[0])}${d[1]}</span></div>`
).join("");
```
